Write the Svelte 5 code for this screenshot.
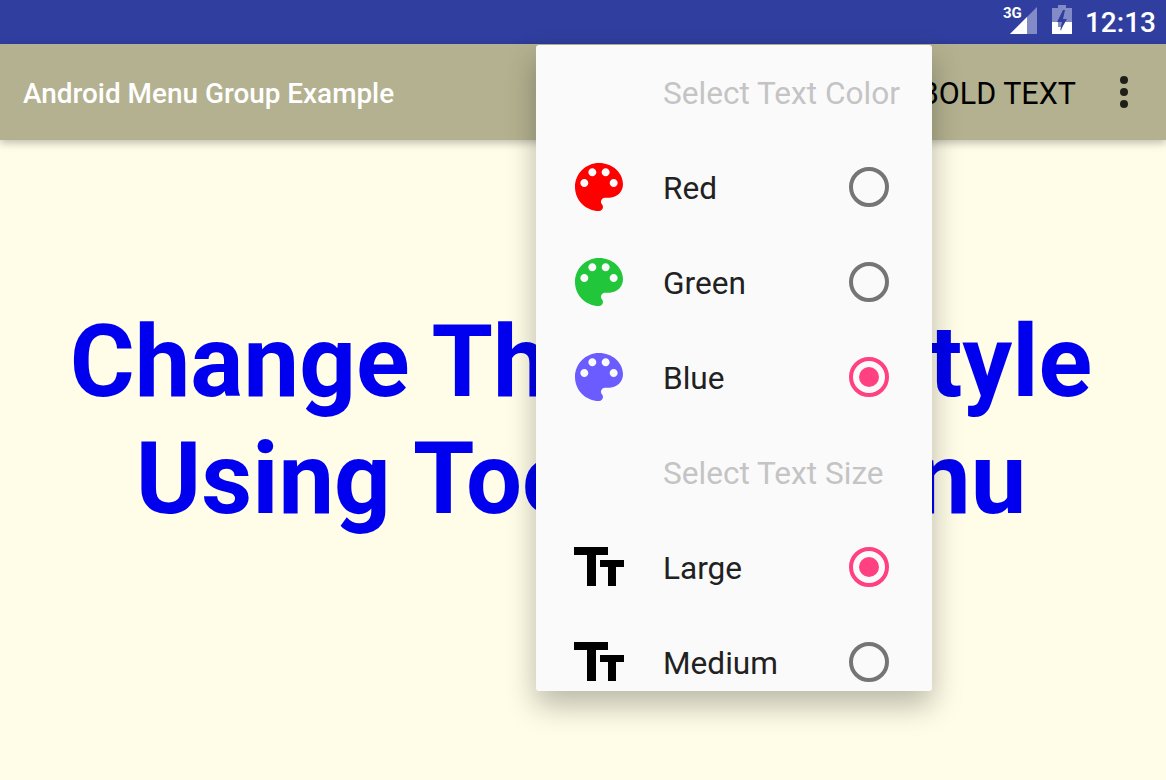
<script>
  const palette = 'M12 3c-4.97 0-9 4.03-9 9s4.03 9 9 9c.83 0 1.5-.67 1.5-1.5 0-.39-.15-.74-.39-1.01-.23-.26-.38-.61-.38-.99 0-.83.67-1.5 1.5-1.5H16c2.76 0 5-2.24 5-5 0-4.42-4.03-8-9-8zm-5.5 9c-.83 0-1.5-.67-1.5-1.5S5.67 9 6.5 9 8 9.67 8 10.5 7.33 12 6.5 12zm3-4C8.67 8 8 7.33 8 6.5S8.67 5 9.5 5s1.5.67 1.5 1.5S10.33 8 9.5 8zm5 0c-.83 0-1.5-.67-1.5-1.5S13.67 5 14.5 5s1.5.67 1.5 1.5S15.33 8 14.5 8zm3 4c-.83 0-1.5-.67-1.5-1.5S16.67 9 17.5 9s1.5.67 1.5 1.5-.67 1.5-1.5 1.5z';

  const menu = [
    { heading: 'Select Text Color' },
    { label: 'Red', icon: 'palette', color: '#ff0000', checked: false },
    { label: 'Green', icon: 'palette', color: '#22c63a', checked: false },
    { label: 'Blue', icon: 'palette', color: '#6a5cff', checked: true },
    { heading: 'Select Text Size' },
    { label: 'Large', icon: 'size', checked: true },
    { label: 'Medium', icon: 'size', checked: false }
  ];
</script>

<div class="screen">
  <div class="status">
    <svg class="signal" width="36" height="30" viewBox="0 0 36 30">
      <path d="M35 2v27H8z" fill="#fff" opacity=".4" />
      <path d="M25 12v17H8z" fill="#fff" />
      <text x="1" y="13" class="net">3G</text>
    </svg>
    <svg class="battery" width="20" height="29" viewBox="0 0 20 29">
      <path d="M6 0h8v3h6v26H0V3h6z" fill="#fff" opacity=".4" />
      <path d="M0 17h6v5h3v7H0zM12 17h8v12H8z" fill="#fff" />
      <path d="M11 5L5 17h5l-2 9 7-12h-4l2-9z" fill="#303f9f" />
    </svg>
    <span class="clock">12:13</span>
  </div>

  <header class="toolbar">
    <span class="title">Android Menu Group Example</span>
    <span class="action">BOLD TEXT</span>
    <div class="dots"><i></i><i></i><i></i></div>
  </header>

  <main>
    <h1>Change This Text Style<br />Using Toolbar Menu</h1>
  </main>

  <div class="menu">
    {#each menu as item}
      {#if item.heading}
        <div class="row heading"><span class="lead"></span><span class="label">{item.heading}</span></div>
      {:else}
        <div class="row">
          <span class="lead">
            {#if item.icon === 'palette'}
              <svg width="64" height="64" viewBox="0 0 24 24"><path d={palette} fill={item.color} /></svg>
            {:else}
              <svg width="52" height="42" viewBox="0 0 52 42">
                <path d="M1 1h34v8H23v31h-9V9H1zM27 14h24v7H43v19h-8V21h-8z" fill="#000" />
              </svg>
            {/if}
          </span>
          <span class="label">{item.label}</span>
          <span class="radio" class:checked={item.checked}></span>
        </div>
      {/if}
    {/each}
  </div>
</div>

<style>
  :global(body) { background: #fffde7; }

  .screen {
    position: relative;
    height: 780px;
    overflow: hidden;
    background: #fffde7;
    font-family: Roboto, sans-serif;
  }

  .status {
    height: 44px;
    background: #303f9f;
    display: flex;
    align-items: center;
    justify-content: flex-end;
    padding-right: 10px;
  }
  .signal { margin-right: 14px; margin-top: -4px; }
  .battery { margin-right: 13px; margin-top: -5px; }
  .net { font: 700 15px "Roboto", sans-serif; fill: #fff; }
  .clock { color: #fff; font-size: 28px; font-weight: 500; }

  .toolbar {
    height: 96px;
    background: #b3b18f;
    display: flex;
    align-items: center;
    padding: 3px 38px 0 23px;
    box-sizing: border-box;
    box-shadow: 0 3px 8px rgba(0, 0, 0, .25);
    position: relative;
  }
  .title { color: #fff; font-size: 27.9px; font-weight: 500; flex: 1; }
  .action { color: #000; font-size: 30.5px; margin: -1px 44px 0 0; }
  .dots { display: flex; flex-direction: column; gap: 4px; margin-top: -3px; }
  .dots i { width: 8px; height: 8px; border-radius: 50%; background: #1f1f1a; }

  main { padding: 164px 4px 0 0; }
  h1 {
    margin: 0;
    text-align: center;
    color: #0000ee;
    font-size: 99.3px;
    font-weight: 700;
    line-height: 117px;
    white-space: nowrap;
  }

  .menu {
    position: absolute;
    left: 536px;
    top: 45px;
    width: 396px;
    height: 646px;
    overflow: hidden;
    background: #fbfafb;
    border-radius: 3px;
    box-shadow: 0 14px 30px rgba(0, 0, 0, .28);
  }
  .row {
    height: 95px;
    box-sizing: border-box;
    padding: 2px 43px 0 0;
    display: flex;
    align-items: center;
    font-size: 31.6px;
    color: #212121;
  }
  .heading { color: #c4c4c4; }
  .lead {
    width: 128px;
    flex: none;
    display: flex;
    justify-content: center;
    margin: -4px 0 0 -1px;
  }
  .label { flex: 1; white-space: nowrap; }
  .radio {
    width: 40px;
    height: 40px;
    box-sizing: border-box;
    border: 4px solid #757575;
    border-radius: 50%;
    display: flex;
    align-items: center;
    justify-content: center;
    margin-top: -4px;
  }
  .radio.checked { border-color: #ff4081; }
  .radio.checked::after {
    content: '';
    width: 20px;
    height: 20px;
    border-radius: 50%;
    background: #ff4081;
  }
</style>
